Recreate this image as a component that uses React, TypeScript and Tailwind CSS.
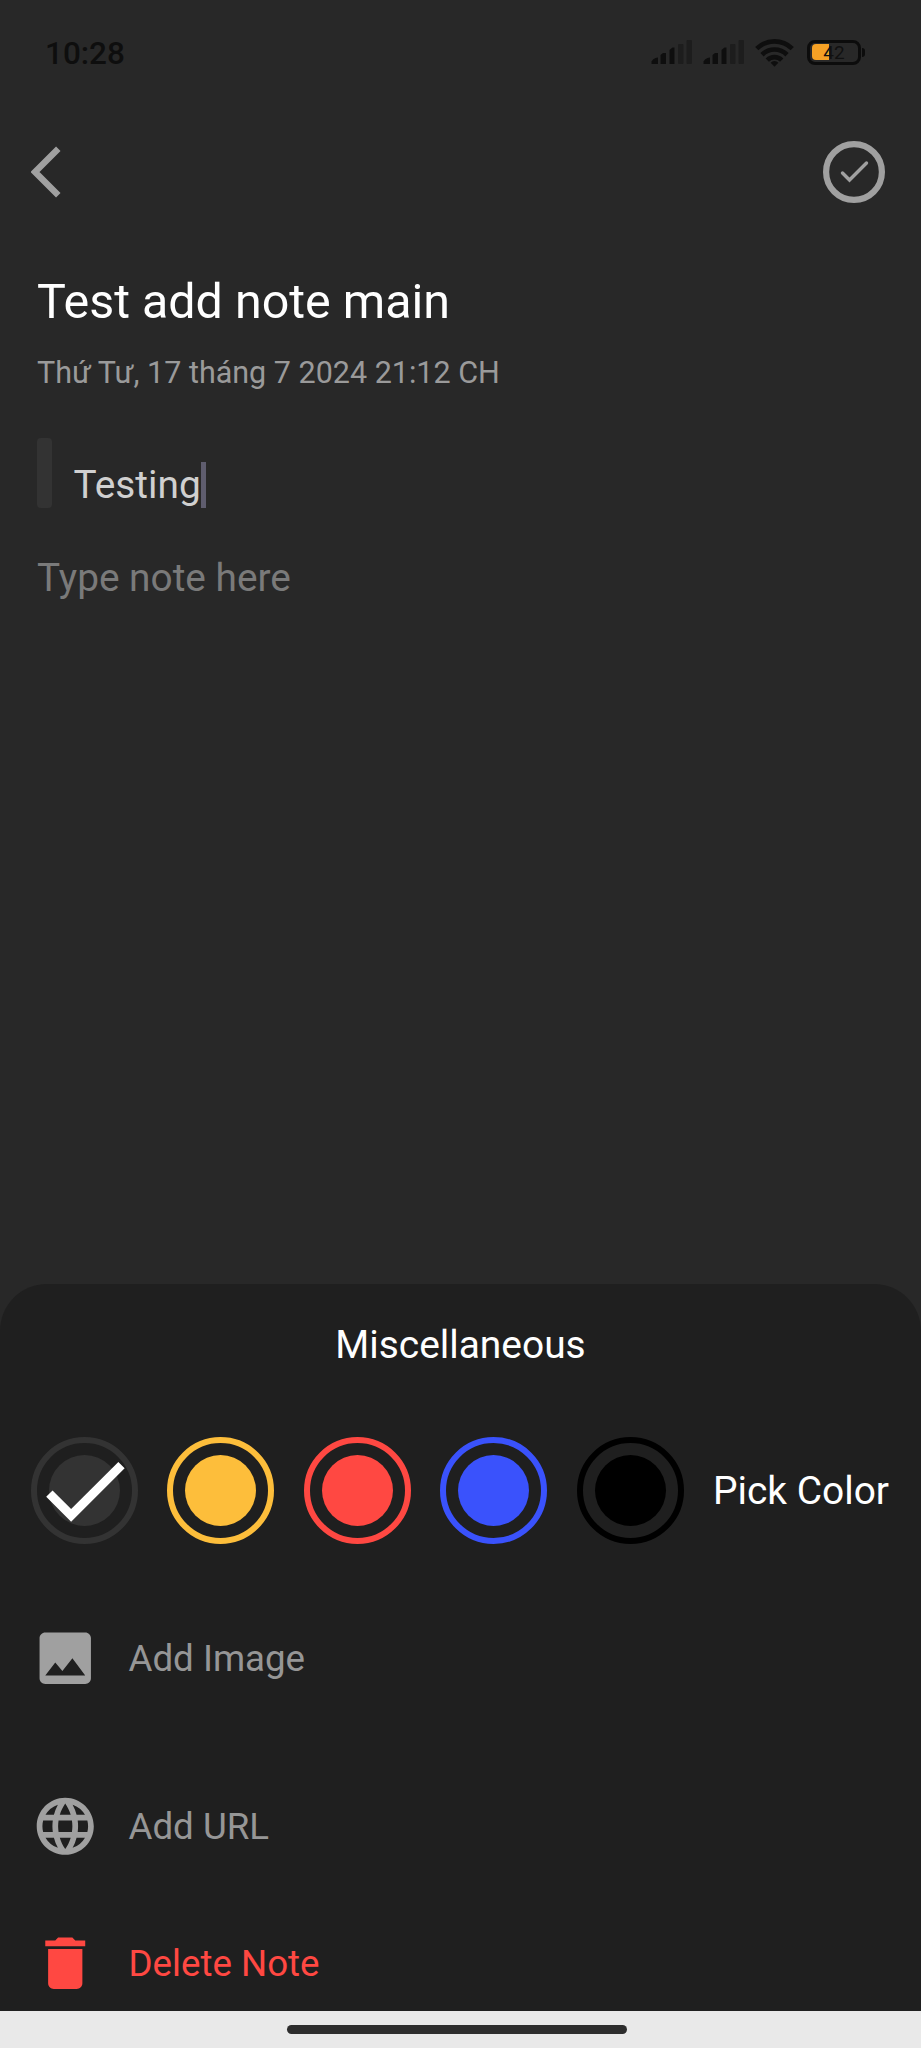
import { MdCheck, MdDelete, MdImage, MdLanguage } from "react-icons/md";

function Signal() {
  return (
    <svg className="h-[26px] w-[41px]" viewBox="0 0 41 26">
      <g fill="#0e0e0e">
        <path d="M0.500 25v-2.500q1.500-3 4-3.500L7 18.500V25z" />
        <path d="M9.500 25V16l2.500-2H15V25z" />
        <path d="M18.500 25V11l3-2.500H23.500V25z" />
      </g>
      <g fill="#1d1d1d">
        <rect x="27" y="5" width="5.500" height="20" rx="1" />
        <rect x="35.500" y="1" width="5.500" height="24" rx="1" />
      </g>
    </svg>
  );
}

function Wifi() {
  return (
    <svg className="h-[29px] w-[39px]" viewBox="0 0 40 29">
      <g fill="none" stroke="#0e0e0e" strokeWidth="4.800">
        <path d="M1.800 10.500a26 26 0 0 1 36.400 0" />
        <path d="M7.200 16.800a18 18 0 0 1 25.600 0" />
        <path d="M12.600 22.300a10.500 10.500 0 0 1 14.800 0" />
      </g>
      <path d="M20 29l-4-4a5.600 5.600 0 0 1 8 0z" fill="#0e0e0e" />
    </svg>
  );
}

function Battery() {
  return (
    <div className="flex items-center">
      <div className="relative flex h-[25px] w-[54px] items-center rounded-[8px] border-[3.5px] border-[#0c0c0c] pl-[2px]">
        <div className="h-[16px] w-[17px] rounded-l-[4px] bg-[#f5a125]" />
        <span className="absolute inset-0 flex items-center justify-center text-[19px] leading-none text-[#101010]">42</span>
      </div>
      <div className="ml-px h-[9px] w-[3px] rounded-r-full bg-[#0c0c0c]" />
    </div>
  );
}

const swatches = [
  { ring: "border-[#333333]", dot: "bg-[#333333]", selected: true },
  { ring: "border-[#fdbe3b]", dot: "bg-[#fdbe3b]", selected: false },
  { ring: "border-[#ff4842]", dot: "bg-[#ff4842]", selected: false },
  { ring: "border-[#3a52fc]", dot: "bg-[#3a52fc]", selected: false },
  { ring: "border-black", dot: "bg-black", selected: false },
];

export default function App() {
  return (
    <div className="flex h-[2048px] w-[921px] flex-col overflow-hidden bg-[#282828] font-[Roboto,sans-serif]">
      <div className="flex h-[104px] items-center pl-[45px] pr-[56px] text-[#0e0e0e]">
        <span className="pt-[3px] text-[31.5px] font-medium leading-[36px]">10:28</span>
        <div className="ml-auto flex items-center">
          <Signal />
          <div className="w-[11px]" />
          <Signal />
          <div className="w-[11px]" />
          <Wifi />
          <div className="w-[13px]" />
          <Battery />
        </div>
      </div>

      <header className="flex h-[135px] items-center justify-between pl-[31px] pr-[36px]">
        <svg className="h-[52px] w-[30px]" viewBox="0 0 30 52">
          <path d="M27.300 2.800L4 26l23.300 23.200" fill="none" stroke="#a0a0a0" strokeWidth="6.400" />
        </svg>
        <svg className="h-[62px] w-[62px]" viewBox="0 0 62 62" fill="none" stroke="#a0a0a0">
          <circle cx="31" cy="31" r="27.900" strokeWidth="6.200" />
          <path d="M19.500 32l7 7L43.500 22" strokeWidth="3.400" strokeLinecap="round" />
        </svg>
      </header>

      <main className="flex h-[1045px] flex-col px-[37px] pt-[33px]">
        <h1 className="text-[48.4px] leading-[60px] text-white">Test add note main</h1>
        <p className="mt-[21px] text-[30.5px] leading-[40px] text-[#9a9a9a]">Thứ Tư, 17 tháng 7 2024 21:12 CH</p>
        <div className="mt-[45px] flex h-[70px]">
          <div className="w-[15px] rounded-[4px] bg-[#333333]" />
          <div className="ml-[21.5px] flex items-end">
            <span className="text-[38.8px] leading-[46px] text-[#d0d0d0]">Testing</span>
            <div className="h-[46px] w-[5px] bg-[#5f5d6e]" />
          </div>
        </div>
        <p className="mt-[46.5px] text-[38.8px] leading-[46px] text-[#7a7a7a]">Type note here</p>
      </main>

      <section className="flex h-[727px] flex-col rounded-t-[47px] bg-[#1f1f1f]">
        <h2 className="mt-[38px] text-center text-[38.9px] leading-[46px] text-white">Miscellaneous</h2>
        <div className="mt-[69px] flex items-center gap-[29.5px] pl-[30.5px]">
          {swatches.map((s) => (
            <div key={s.ring} className={`relative flex size-[107px] shrink-0 items-center justify-center rounded-full border-6 ${s.ring}`}>
              <div className={`size-[71px] rounded-full ${s.dot}`} />
              {s.selected && <MdCheck className="absolute -left-[6px] -top-[6px] size-[107px] text-white" />}
            </div>
          ))}
          <span className="whitespace-nowrap text-[38.9px] leading-[46px] text-white">Pick Color</span>
        </div>
        <ul className="flex flex-col pl-[30.5px] text-[36.7px] leading-[42px] text-[#969696]">
          <li className="mt-[80px] flex h-[69px] items-center">
            <MdImage className="size-[68.5px] text-[#a0a0a0]" />
            <span className="ml-[29.5px]">Add Image</span>
          </li>
          <li className="mt-[99px] flex h-[69px] items-center">
            <MdLanguage className="size-[68.5px] text-[#a0a0a0]" />
            <span className="ml-[29.5px]">Add URL</span>
          </li>
          <li className="mt-[68px] flex h-[69px] items-center text-[#ff4842]">
            <MdDelete className="size-[68.5px]" />
            <span className="ml-[29.5px]">Delete Note</span>
          </li>
        </ul>
      </section>

      <footer className="flex flex-1 items-start justify-center bg-[#e9e9e9] pt-[14px] pr-[7px]">
        <div className="h-[9px] w-[340px] rounded-full bg-[#2d2d2d]" />
      </footer>
    </div>
  );
}
